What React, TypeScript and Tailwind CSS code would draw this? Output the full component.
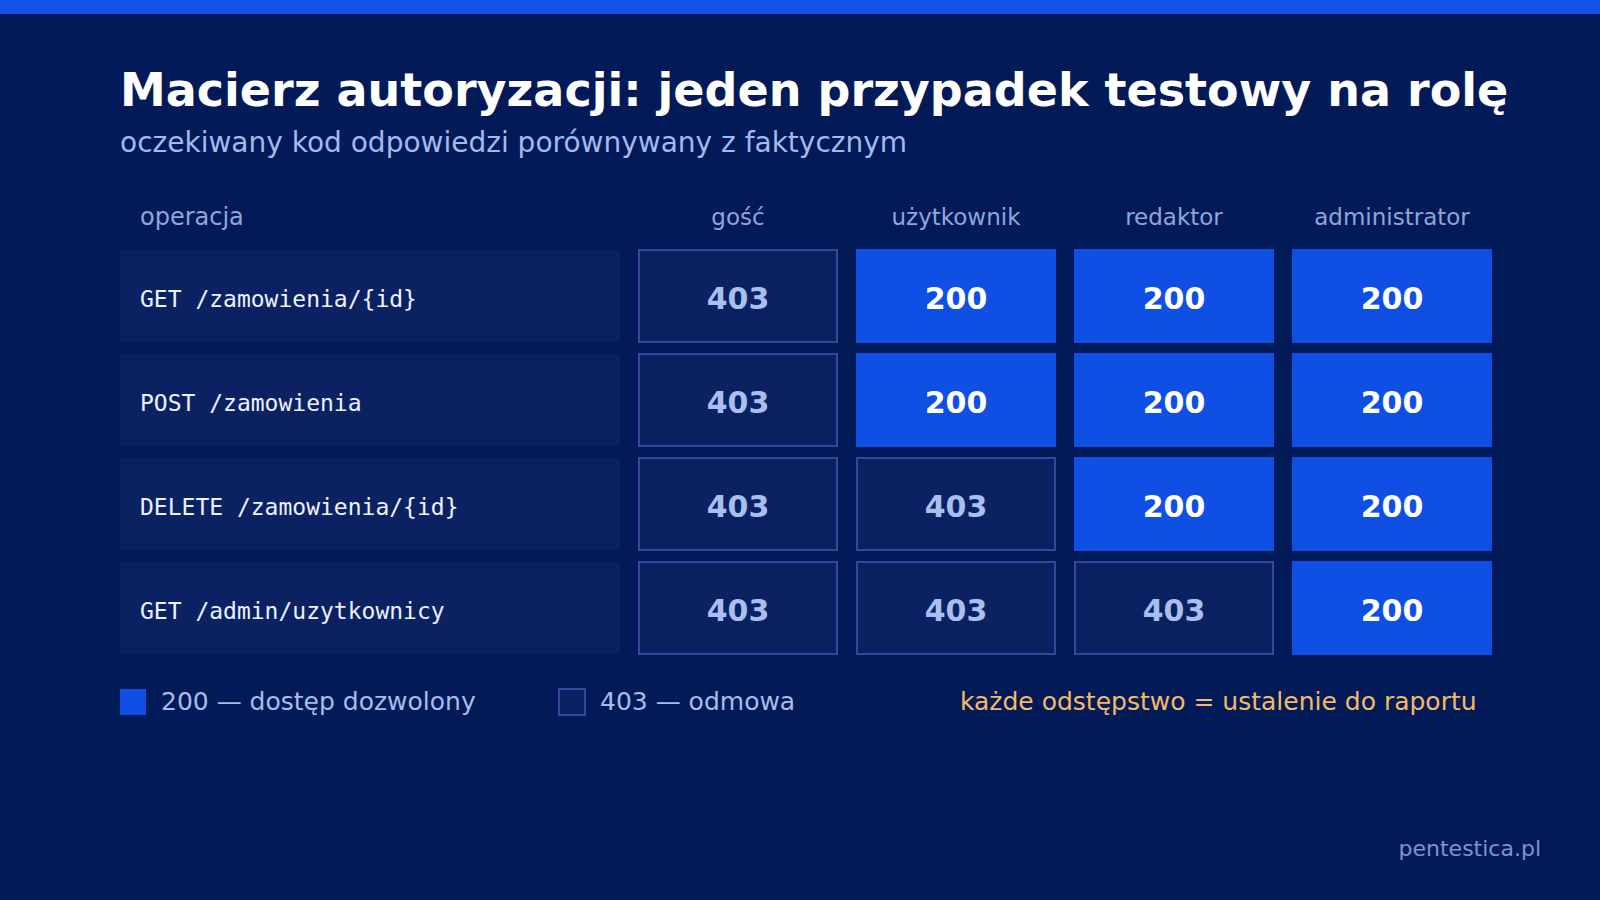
const ROLES = ['gość', 'użytkownik', 'redaktor', 'administrator']

const ROWS: { op: string; codes: number[] }[] = [
  { op: 'GET /zamowienia/{id}', codes: [403, 200, 200, 200] },
  { op: 'POST /zamowienia', codes: [403, 200, 200, 200] },
  { op: 'DELETE /zamowienia/{id}', codes: [403, 403, 200, 200] },
  { op: 'GET /admin/uzytkownicy', codes: [403, 403, 403, 200] },
]

function StatusCell({ code }: { code: number }) {
  const allowed = code === 200
  return (
    <div
      className={`h-[94px] flex items-center justify-center pt-[4px] text-[30px] font-bold ${
        allowed
          ? 'bg-[#0f4fe4] text-white'
          : 'bg-[#0b2262] border-2 border-[#2c4c9e] text-[#a9bff0]'
      }`}
    >
      {code}
    </div>
  )
}

export default function App() {
  return (
    <div className="w-[1600px] h-[900px] bg-[#021a57] flex flex-col overflow-hidden font-['DejaVu_Sans',sans-serif]">
      {/* Top bar */}
      <div className="h-[14px] bg-[#1252e8] shrink-0" />

      <div className="px-[120px]">
        <h1 className="mt-[48px] text-[46px] leading-[56px] font-bold text-white whitespace-nowrap">
          Macierz autoryzacji: jeden przypadek testowy na rolę
        </h1>
        <p className="mt-[7px] text-[28px] leading-[36px] text-[#a4b9ec]">
          oczekiwany kod odpowiedzi porównywany z faktycznym
        </p>

        {/* Header */}
        <div className="mt-[41px] grid grid-cols-[500px_repeat(4,200px)] gap-x-[18px] text-[23px] leading-[30px] text-[#8fa6dc]">
          <div className="pl-[20px] text-[24px]">operacja</div>
          {ROLES.map((role) => (
            <div key={role} className="text-center">
              {role}
            </div>
          ))}
        </div>

        {/* Matrix */}
        <div className="mt-[17px] grid grid-cols-[500px_repeat(4,200px)] gap-x-[18px] gap-y-[10px]">
          {ROWS.map((row) => (
            <div key={row.op} className="contents">
              <div className="h-[92px] my-[1px] bg-[#0b2262] flex items-center pl-[20px] pt-[6px] font-['DejaVu_Sans_Mono',monospace] text-[23px] text-[#eef2ff]">
                {row.op}
              </div>
              {row.codes.map((code, i) => (
                <StatusCell key={i} code={code} />
              ))}
            </div>
          ))}
        </div>

        {/* Legend */}
        <div className="mt-[32px] h-[30px] flex items-center text-[25px] leading-[30px]">
          <div className="w-[438px] flex items-center gap-[15px] text-[#a9bde9]">
            <span className="w-[26px] h-[26px] bg-[#0f4fe4]" />
            <span>200 — dostęp dozwolony</span>
          </div>
          <div className="w-[402px] flex items-center gap-[14px] text-[#a9bde9]">
            <span className="w-[28px] h-[28px] border-2 border-[#2c4c9e] bg-[#0b2262]" />
            <span>403 — odmowa</span>
          </div>
          <div className="text-[#f5b968]">każde odstępstwo = ustalenie do raportu</div>
        </div>
      </div>

      {/* Footer */}
      <div className="mt-auto mb-[36px] pr-[59px] flex justify-end text-[22px] leading-[30px] text-[#7d95cf]">
        pentestica.pl
      </div>
    </div>
  )
}
